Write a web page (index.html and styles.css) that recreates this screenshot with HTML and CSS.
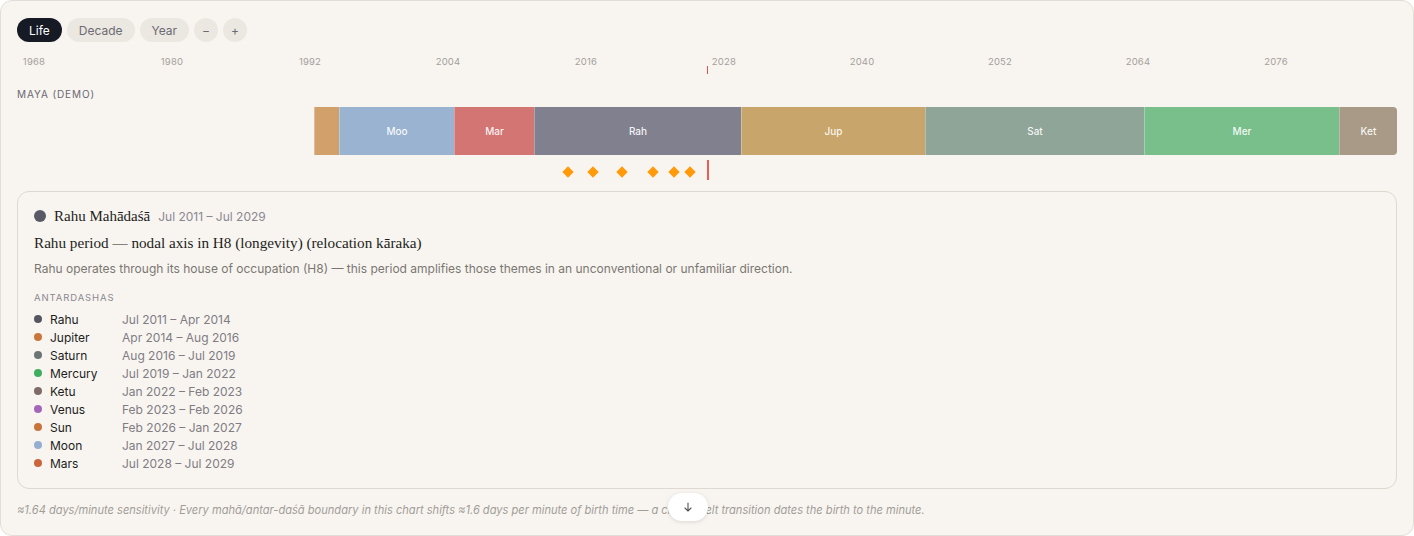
FILE: index.html
```html
<!DOCTYPE html>
<html lang="en">
<head>
<meta charset="utf-8">
<title>Dasha timeline</title>
<link rel="stylesheet" href="styles.css">
</head>
<body>
<div class="frame">
  <div class="controls">
    <button class="pill active">Life</button>
    <button class="pill">Decade</button>
    <button class="pill">Year</button>
    <button class="round">−</button>
    <button class="round">+</button>
  </div>

  <div class="axis">
    <span class="tick" style="left:17px">1968</span>
    <span class="tick" style="left:155px">1980</span>
    <span class="tick" style="left:293px">1992</span>
    <span class="tick" style="left:431px">2004</span>
    <span class="tick" style="left:569px">2016</span>
    <span class="tick" style="left:707px">2028</span>
    <span class="tick" style="left:845px">2040</span>
    <span class="tick" style="left:983px">2052</span>
    <span class="tick" style="left:1121px">2064</span>
    <span class="tick" style="left:1259px">2076</span>
    <span class="now-tick" style="left:690px"></span>
  </div>

  <div class="person">MAYA (DEMO)</div>

  <div class="track">
    <div class="bar" style="margin-left:297px">
      <div class="seg sun" style="width:25px"></div>
      <div class="seg moon" style="width:115px">Moo</div>
      <div class="seg mars" style="width:80px">Mar</div>
      <div class="seg rahu" style="width:207px">Rah</div>
      <div class="seg jup" style="width:184px">Jup</div>
      <div class="seg sat" style="width:219px">Sat</div>
      <div class="seg mer" style="width:195px">Mer</div>
      <div class="seg ket" style="width:58px">Ket</div>
    </div>
  </div>

  <div class="markers">
    <span class="diamond" style="left:551px"></span>
    <span class="diamond" style="left:576px"></span>
    <span class="diamond" style="left:605px"></span>
    <span class="diamond" style="left:636px"></span>
    <span class="diamond" style="left:657px"></span>
    <span class="diamond" style="left:673px"></span>
    <span class="now-line" style="left:690px"></span>
  </div>

  <section class="card">
    <div class="card-head">
      <span class="big-dot"></span>
      <span class="card-title">Rahu Mahādaśā</span>
      <span class="card-range">Jul 2011 – Jul 2029</span>
    </div>
    <h2 class="card-heading">Rahu period — nodal axis in H8 (longevity) (relocation kāraka)</h2>
    <p class="card-desc">Rahu operates through its house of occupation (H8) — this period amplifies those themes in an unconventional or unfamiliar direction.</p>
    <div class="sub-label">ANTARDASHAS</div>
    <ul class="antar">
      <li><span class="dot c-rahu"></span><span class="name">Rahu</span><span class="range">Jul 2011 – Apr 2014</span></li>
      <li><span class="dot c-jup"></span><span class="name">Jupiter</span><span class="range">Apr 2014 – Aug 2016</span></li>
      <li><span class="dot c-sat"></span><span class="name">Saturn</span><span class="range">Aug 2016 – Jul 2019</span></li>
      <li><span class="dot c-mer"></span><span class="name">Mercury</span><span class="range">Jul 2019 – Jan 2022</span></li>
      <li><span class="dot c-ket"></span><span class="name">Ketu</span><span class="range">Jan 2022 – Feb 2023</span></li>
      <li><span class="dot c-ven"></span><span class="name">Venus</span><span class="range">Feb 2023 – Feb 2026</span></li>
      <li><span class="dot c-sun"></span><span class="name">Sun</span><span class="range">Feb 2026 – Jan 2027</span></li>
      <li><span class="dot c-moon"></span><span class="name">Moon</span><span class="range">Jan 2027 – Jul 2028</span></li>
      <li><span class="dot c-mars"></span><span class="name">Mars</span><span class="range">Jul 2028 – Jul 2029</span></li>
    </ul>
  </section>

  <div class="footer">
    <p class="note">≈1.64 days/minute sensitivity · Every mahā/antar-daśā boundary in this chart shifts ≈1.6 days per minute of birth time — a clearly-felt transition dates the birth to the minute.</p>
    <button class="scroll-btn" aria-label="Scroll down">
      <svg width="10" height="10" viewBox="0 0 10 10"><path d="M5 1v8M2 6l3 3 3-3" fill="none" stroke="#555" stroke-width="1.1" stroke-linecap="round" stroke-linejoin="round"/></svg>
    </button>
  </div>
</div>
</body>
</html>
```

FILE: styles.css
```css
* { box-sizing: border-box; }
html, body { margin: 0; padding: 0; background: #ffffff; }
body {
  font-family: Inter, "Noto Sans", "Liberation Sans", sans-serif;
  color: #1f1f24;
}
.frame {
  width: 1414px;
  height: 536px;
  background: #f8f5f0;
  border: 1px solid #e2ddd6;
  border-radius: 12px;
  padding: 17px 16px 0 16px;
  overflow: hidden;
}
.controls {
  display: flex;
  align-items: center;
  gap: 5px;
  height: 24px;
}
.pill {
  height: 24px;
  border: none;
  border-radius: 12px;
  background: #ebe7e1;
  color: #6b6b74;
  font-family: Inter, sans-serif;
  font-size: 12px;
  padding: 0 12px;
}
.pill.active { background: #151a24; color: #ffffff; }
.round {
  width: 24px;
  height: 24px;
  border: none;
  border-radius: 50%;
  background: #ebe7e1;
  color: #6b6b74;
  font-family: Inter, sans-serif;
  font-size: 12px;
  padding: 0;
}
.controls .round:first-of-type { margin-left: 3px; }
.axis {
  position: relative;
  height: 34px;
  margin-top: 10px;
}
.tick {
  position: absolute;
  top: 4px;
  transform: translateX(-50%);
  font-size: 9.5px;
  color: #a3a09c;
  letter-spacing: 0.2px;
}
.now-tick {
  position: absolute;
  top: 14px;
  width: 1px;
  height: 8px;
  background: #d9574f;
}
.person {
  font-size: 10px;
  letter-spacing: 0.9px;
  color: #6a6870;
  line-height: 14px;
  height: 14px;
  margin-top: 1px;
}
.track { margin-top: 6px; }
.bar {
  display: flex;
  height: 48px;
  width: 1083px;
  border-radius: 0 4px 4px 0;
  overflow: hidden;
}
.seg {
  flex: none;
  display: flex;
  align-items: center;
  justify-content: center;
  color: rgba(255,255,255,0.92);
  font-size: 10px;
  font-weight: 500;
  border-left: 1px solid rgba(255,255,255,0.3);
}
.sun { background: #d1a06b; }
.moon { background: #99b3d0; }
.mars { background: #d27573; }
.rahu { background: #81808f; }
.jup { background: #c8a56a; }
.sat { background: #8fa597; }
.mer { background: #78bf8c; }
.ket { background: #a89a86; }
.markers {
  position: relative;
  height: 36px;
}
.diamond {
  position: absolute;
  top: 13px;
  width: 8px;
  height: 8px;
  background: #ff9a0a;
  transform: translateX(-4px) rotate(45deg);
}
.now-line {
  position: absolute;
  top: 5px;
  width: 2px;
  height: 20px;
  background: #ef5a55;
}
.card {
  border: 1px solid #ddd8d0;
  border-radius: 12px;
  padding: 15px 16px 15px 16px;
  height: 298px;
}
.card-head {
  display: flex;
  align-items: center;
  height: 18px;
}
.big-dot {
  width: 12px;
  height: 12px;
  border-radius: 50%;
  background: #595a65;
  margin-right: 8px;
}
.card-title {
  font-family: "Liberation Serif", "DejaVu Serif", serif;
  font-size: 15px;
  color: #1d1d22;
  margin-right: 8px;
}
.card-range {
  font-size: 12px;
  color: #8a8790;
}
.card-heading {
  font-family: "Liberation Serif", "DejaVu Serif", serif;
  font-weight: normal;
  font-size: 15.2px;
  line-height: 20px;
  margin: 8px 0 0 0;
  color: #1d1d22;
}
.card-desc {
  font-size: 12px;
  line-height: 18px;
  color: #7a7772;
  margin: 7px 0 0 0;
}
.sub-label {
  font-size: 9.5px;
  letter-spacing: 0.9px;
  color: #8b8890;
  line-height: 14px;
  margin-top: 13px;
}
.antar {
  list-style: none;
  margin: 5px 0 0 0;
  padding: 0;
}
.antar li {
  display: flex;
  align-items: center;
  height: 18px;
  font-size: 12px;
}
.dot {
  width: 8px;
  height: 8px;
  border-radius: 50%;
  margin-right: 8px;
  flex: none;
}
.name { width: 72px; color: #1d1d22; }
.range { color: #7f7c84; }
.c-rahu { background: #55565f; }
.c-jup { background: #c8763a; }
.c-sat { background: #6c7476; }
.c-mer { background: #3fae5f; }
.c-ket { background: #7f6c68; }
.c-ven { background: #a466b8; }
.c-sun { background: #c8733c; }
.c-moon { background: #96aecf; }
.c-mars { background: #c9663e; }
.footer {
  position: relative;
  margin-top: 13px;
}
.note {
  margin: 0;
  font-size: 11.1px;
  line-height: 16px;
  font-style: italic;
  color: #a19d98;
}
.scroll-btn {
  position: absolute;
  left: 651px;
  top: -9px;
  width: 40px;
  height: 28px;
  border: none;
  border-radius: 14px;
  background: #ffffff;
  box-shadow: 0 1px 4px rgba(0,0,0,0.12);
  display: flex;
  align-items: center;
  justify-content: center;
  padding: 0;
}
```
